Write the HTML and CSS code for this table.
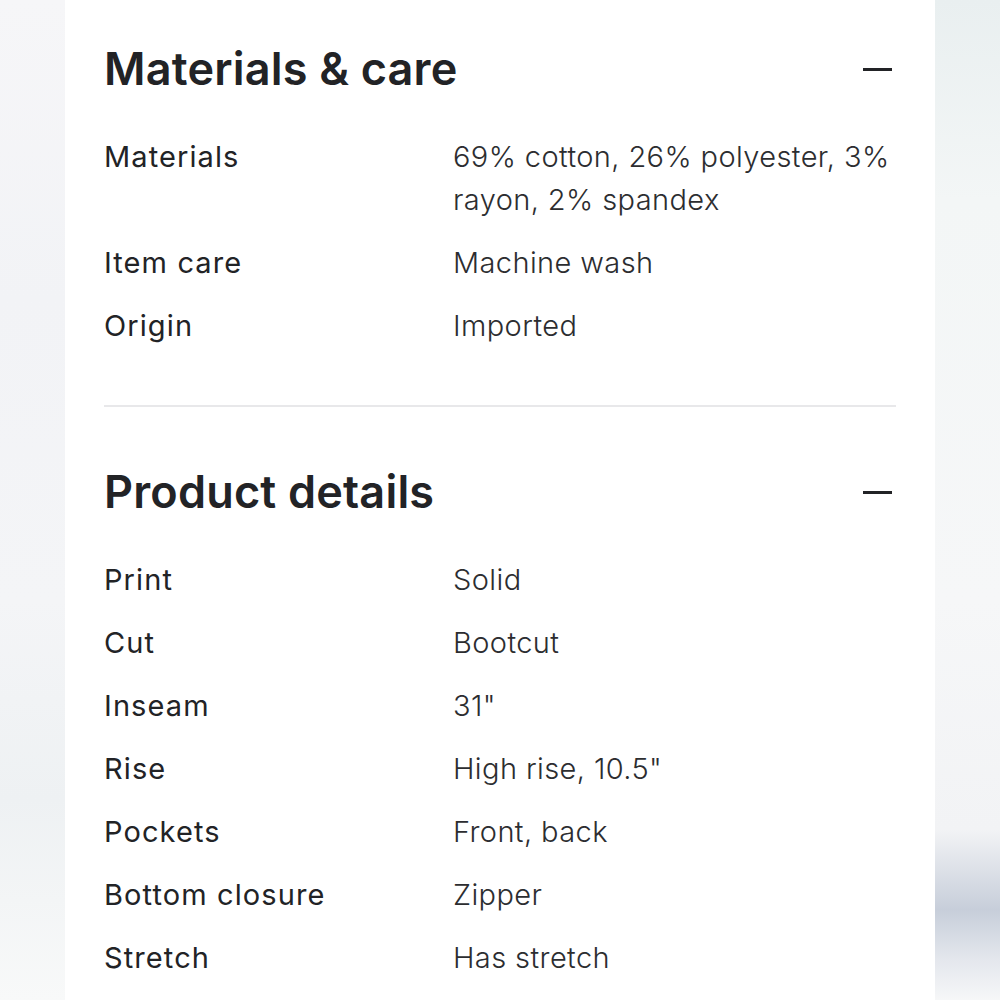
FILE: index.html
```html
<!DOCTYPE html>
<html lang="en">
<head>
<meta charset="utf-8">
<title>Materials &amp; care</title>
<link rel="stylesheet" href="styles.css">
</head>
<body>
<div class="page">
  <div class="side side-left"></div>
  <main class="card">
    <section class="section section-first">
      <div class="section-head">
        <h2 class="section-title">Materials &amp; care</h2>
        <span class="minus" aria-label="Collapse"></span>
      </div>
      <dl class="specs">
        <div class="row"><dt>Materials</dt><dd>69% cotton, 26% polyester, 3% rayon, 2% spandex</dd></div>
        <div class="row"><dt>Item care</dt><dd>Machine wash</dd></div>
        <div class="row"><dt>Origin</dt><dd>Imported</dd></div>
      </dl>
    </section>
    <hr class="divider">
    <section class="section">
      <div class="section-head">
        <h2 class="section-title">Product details</h2>
        <span class="minus" aria-label="Collapse"></span>
      </div>
      <dl class="specs">
        <div class="row"><dt>Print</dt><dd>Solid</dd></div>
        <div class="row"><dt>Cut</dt><dd>Bootcut</dd></div>
        <div class="row"><dt>Inseam</dt><dd>31"</dd></div>
        <div class="row"><dt>Rise</dt><dd>High rise, 10.5"</dd></div>
        <div class="row"><dt>Pockets</dt><dd>Front, back</dd></div>
        <div class="row"><dt>Bottom closure</dt><dd>Zipper</dd></div>
        <div class="row"><dt>Stretch</dt><dd>Has stretch</dd></div>
      </dl>
    </section>
  </main>
  <div class="side side-right"></div>
</div>
</body>
</html>
```

FILE: styles.css
```css
html, body {
  margin: 0;
  padding: 0;
  height: 1000px;
  overflow: hidden;
}
body {
  font-family: Inter, "Noto Sans", "Liberation Sans", sans-serif;
  color: #222326;
  background: #f4f5f7;
}
.page {
  display: flex;
  height: 1000px;
}
.side {
  width: 65px;
  flex: none;
}
.side-left {
  background: linear-gradient(180deg, #f6f6f8 0%, #f2f3f6 30%, #f4f5f7 60%, #eef1f3 80%, #f8f9f9 100%);
}
.side-right {
  background: linear-gradient(180deg, #e9eff0 0%, #f3f6f6 20%, #f6f7f8 60%, #f2f3f5 83%, #c7ceda 91%, #e4e7ed 96%, #f6f7f8 100%);
}
.card {
  width: 870px;
  flex: none;
  background: #ffffff;
  padding: 0 39px;
  box-sizing: border-box;
}
.section {
  padding: 58px 0 58px;
}
.section-first {
  padding-top: 42px;
}
.section-head {
  display: flex;
  align-items: center;
  justify-content: space-between;
  height: 54px;
  margin-bottom: 39px;
}
.section-title {
  margin: 0;
  font-size: 45px;
  line-height: 54px;
  font-weight: 600;
  letter-spacing: 0.2px;
  color: #222326;
}
.minus {
  display: block;
  width: 29px;
  height: 3px;
  background: #222326;
  margin-right: 4px;
}
.specs {
  margin: 0;
  display: flex;
  flex-direction: column;
  gap: 20px;
}
.row {
  display: grid;
  grid-template-columns: 349px 1fr;
  font-size: 29px;
  line-height: 43px;
}
.row dt {
  font-weight: 400;
  letter-spacing: 1.1px;
  color: #222326;
}
.row dd {
  margin: 0;
  font-weight: 300;
  letter-spacing: 0.4px;
  color: #2c2d30;
}
.divider {
  margin: 0;
  border: 0;
  height: 2px;
  background: #e8e8ea;
}
```
